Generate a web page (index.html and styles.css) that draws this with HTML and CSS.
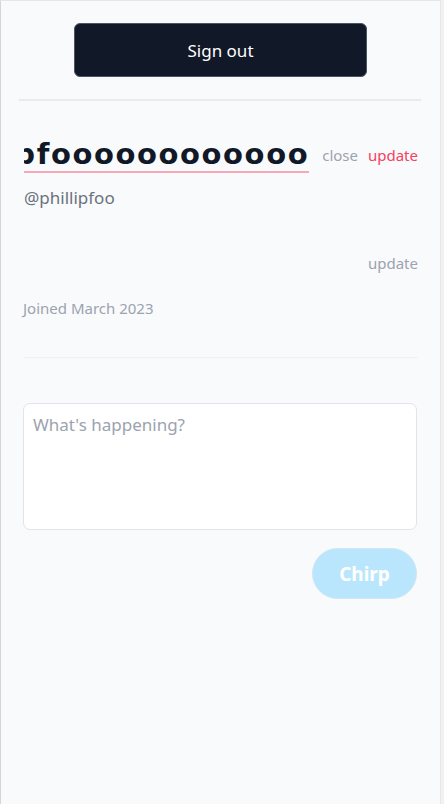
FILE: index.html
```html
<!DOCTYPE html>
<html>
<head>
<meta charset="utf-8">
<link rel="stylesheet" href="styles.css">
</head>
<body>
<main class="shell">
  <div class="top">
    <button class="signout">Sign out</button>
  </div>
  <hr class="rule">
  <section class="profile">
    <div class="name-row">
      <div class="name-input"><span>phillipfoooooooooooo</span></div>
      <span class="link muted">close</span>
      <span class="link pink">update</span>
    </div>
    <div class="handle">@phillipfoo</div>
    <div class="bio-row"><span class="link muted">update</span></div>
    <div class="joined">Joined March 2023</div>
    <hr class="rule light">
  </section>
  <section class="compose">
    <div class="textarea">What's happening?</div>
    <div class="actions"><button class="chirp">Chirp</button></div>
  </section>
</main>
</body>
</html>
```

FILE: styles.css
```css
html, body {
  margin: 0;
  padding: 0;
  height: 100%;
}
body {
  background: #f1f1f1;
  font-family: "Noto Sans", "Open Sans", sans-serif;
}
.shell {
  box-sizing: border-box;
  width: 441px;
  min-height: 100%;
  background: #f9fafb;
  border-left: 1px solid #d4d6da;
  border-top: 1px solid #e5e7eb;
  border-right: 1px solid #e5e7eb;
}
.top {
  display: flex;
  justify-content: center;
  padding-top: 22px;
}
.signout {
  width: 293px;
  height: 54px;
  background: #111827;
  color: #fff;
  border: 1px solid #4b5563;
  border-radius: 6px;
  font-family: inherit;
  font-size: 17px;
}
.rule {
  border: 0;
  border-top: 2px solid #e8eaee;
  margin: 22px 19px 0 18px;
}
.profile {
  padding: 0 22px 0 22px;
}
.name-row {
  display: flex;
  align-items: center;
  margin-top: 36px;
}
.name-input {
  width: 290px;
  display: flex;
  justify-content: flex-end;
  overflow: hidden;
  white-space: nowrap;
  font-family: "DejaVu Sans", sans-serif;
  font-size: 29px;
  font-weight: 700;
  letter-spacing: 1.6px;
  color: #111827;
  line-height: 34px;
  border-bottom: 2px solid #f9a8b8;
  margin-left: 1px;
}
.link {
  font-size: 15px;
}
.muted {
  color: #9ca3af;
  margin-left: 13px;
}
.pink {
  color: #f43f5e;
  margin-left: 10px;
}
.handle {
  margin-top: 13px;
  font-size: 17px;
  color: #6b7280;
  padding-left: 1px;
}
.bio-row {
  display: flex;
  justify-content: flex-end;
  margin-top: 44px;
}
.bio-row .muted { margin-left: 0; }
.joined {
  margin-top: 25px;
  font-size: 15px;
  color: #9ca3af;
  padding-left: 0;
}
.rule.light {
  border-top: 1px solid #f0f1f3;
  margin: 39px 0 0 1px;
}
.compose {
  padding: 45px 23px 0 22px;
}
.textarea {
  box-sizing: border-box;
  height: 127px;
  background: #fff;
  border: 1px solid #e2e4e8;
  border-radius: 7px;
  padding: 9px 9px;
  font-size: 17px;
  color: #9ca3af;
}
.actions {
  display: flex;
  justify-content: flex-end;
  margin-top: 18px;
}
.chirp {
  width: 105px;
  height: 51px;
  border-radius: 26px;
  background: #bae6fd;
  border: 1px solid #cfe6f4;
  color: #fff;
  font-family: inherit;
  font-weight: 700;
  font-size: 19px;
}
```
